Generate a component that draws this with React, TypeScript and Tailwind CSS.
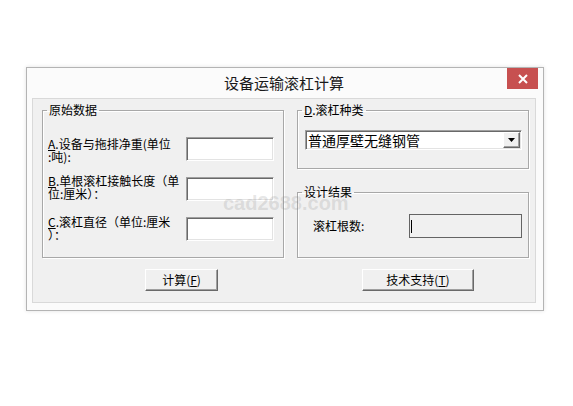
import React from "react";

const sunken =
  "border border-t-[#a0a0a0] border-l-[#a0a0a0] border-r-white border-b-white shadow-[inset_1px_1px_0_#696969,inset_-1px_-1px_0_#e3e3e3]";
const raised =
  "border border-t-white border-l-white border-r-[#696969] border-b-[#696969] shadow-[inset_-1px_-1px_0_#a0a0a0]";
const group =
  "border border-[#a8a8a8] shadow-[inset_1px_1px_0_#ffffff,1px_1px_0_#ffffff] p-0 m-0";

function Legend({ children }: { children: React.ReactNode }) {
  return (
    <legend className="ml-[4px] px-[2px] text-[12px] leading-[14px] text-black">
      {children}
    </legend>
  );
}

function Row({ label, top }: { label: React.ReactNode; top?: string }) {
  return (
    <div className="flex h-[24px] items-center justify-between pl-[5px] pr-[9px]">
      <div className={`whitespace-nowrap text-[12px] leading-[13px] text-black ${top ?? ""}`}>{label}</div>
      <div className={`h-[24px] w-[88px] bg-white ${sunken}`} />
    </div>
  );
}

export default function App() {
  return (
    <div className="relative h-[406px] w-[573px] bg-white pl-[26px] pt-[67px] font-['Noto_Sans_CJK_SC',sans-serif]">
      <div className="relative flex h-[244px] w-[518px] flex-col border border-[#b4b4b4] bg-[#fbfbfb] pl-[5px] pr-[7px] shadow-[0_0_4px_rgba(0,0,0,0.12)]">
        <div className="flex h-[30px] items-center justify-center text-[15px] leading-[16px] text-[#1a1a1a]">
          设备运输滚杠计算
        </div>
        <div className="absolute right-[5px] top-0 flex h-[21px] w-[31px] items-center justify-center bg-[#c75050]">
          <svg width="10" height="10" viewBox="0 0 10 10">
            <path d="M1 1 L9 9 M9 1 L1 9" stroke="white" strokeWidth="2" />
          </svg>
        </div>

        <div className="h-[205px] border border-[#d9d9d9] bg-[#f0f0f0] pl-[9px] pt-[4px]">
          <div className="flex items-start">
            <fieldset className={`h-[155px] w-[242px] ${group}`}>
              <Legend>原始数据</Legend>
              <div className="flex flex-col gap-[16px] pt-[20px]">
                <Row
                  top="mt-[2px]"
                  label={
                    <>
                      <span className="underline">A</span>.设备与拖排净重(单位
                      <br />:吨):
                    </>
                  }
                />
                <Row
                  top="-mt-[5px]"
                  label={
                    <>
                      <span className="underline">B</span>.单根滚杠接触长度（单
                      <br />位:厘米）：
                    </>
                  }
                />
                <Row
                  top="-mt-[2px]"
                  label={
                    <>
                      <span className="underline">C</span>.滚杠直径（单位:厘米
                      <br />）：
                    </>
                  }
                />
              </div>
            </fieldset>

            <div className="ml-[13px] flex w-[232px] flex-col">
              <fieldset className={`h-[66px] w-[232px] ${group}`}>
                <Legend>
                  <span className="underline">D</span>.滚杠种类
                </Legend>
                <div className="pl-[7px] pt-[13px]">
                  <div className={`flex h-[20px] w-[217px] items-center bg-white pr-[1px] ${sunken}`}>
                    <div className="flex-1 pl-[2px] text-[14px] leading-[16px] text-black">
                      普通厚壁无缝钢管
                    </div>
                    <div className={`flex h-[16px] w-[17px] items-center justify-center bg-[#f0f0f0] ${raised}`}>
                      <svg width="7" height="4" viewBox="0 0 7 4">
                        <path d="M0 0 H7 L3.5 4 Z" fill="black" />
                      </svg>
                    </div>
                  </div>
                </div>
              </fieldset>

              <fieldset className={`mt-[16px] h-[73px] w-[232px] ${group}`}>
                <Legend>设计结果</Legend>
                <div className="flex items-center pl-[15px] pt-[15px]">
                  <div className="w-[96px] text-[12px] leading-[14px] text-black">滚杠根数:</div>
                  <div className="flex h-[24px] w-[113px] items-center border border-[#646464] bg-[#f0f0f0]">
                    <div className="ml-[1px] h-[13px] w-px bg-black" />
                  </div>
                </div>
              </fieldset>
            </div>
          </div>

          <div className="mt-[11px] flex">
            <div className={`ml-[103px] flex h-[22px] w-[73px] items-center justify-center bg-[#f0f0f0] text-[12px] leading-[14px] text-black ${raised}`}>
              计算(<span className="underline">F</span>)
            </div>
            <div className={`ml-[144px] flex h-[22px] w-[112px] items-center justify-center bg-[#f0f0f0] text-[12px] leading-[14px] text-black ${raised}`}>
              技术支持(<span className="underline">T</span>)
            </div>
          </div>
        </div>
      </div>

      <div className="pointer-events-none absolute left-[223px] top-[191px] font-['Liberation_Sans',Arial,sans-serif] text-[20px] font-bold leading-[24px] text-[rgba(128,128,128,0.2)]">
        cad2688.com
      </div>
    </div>
  );
}
